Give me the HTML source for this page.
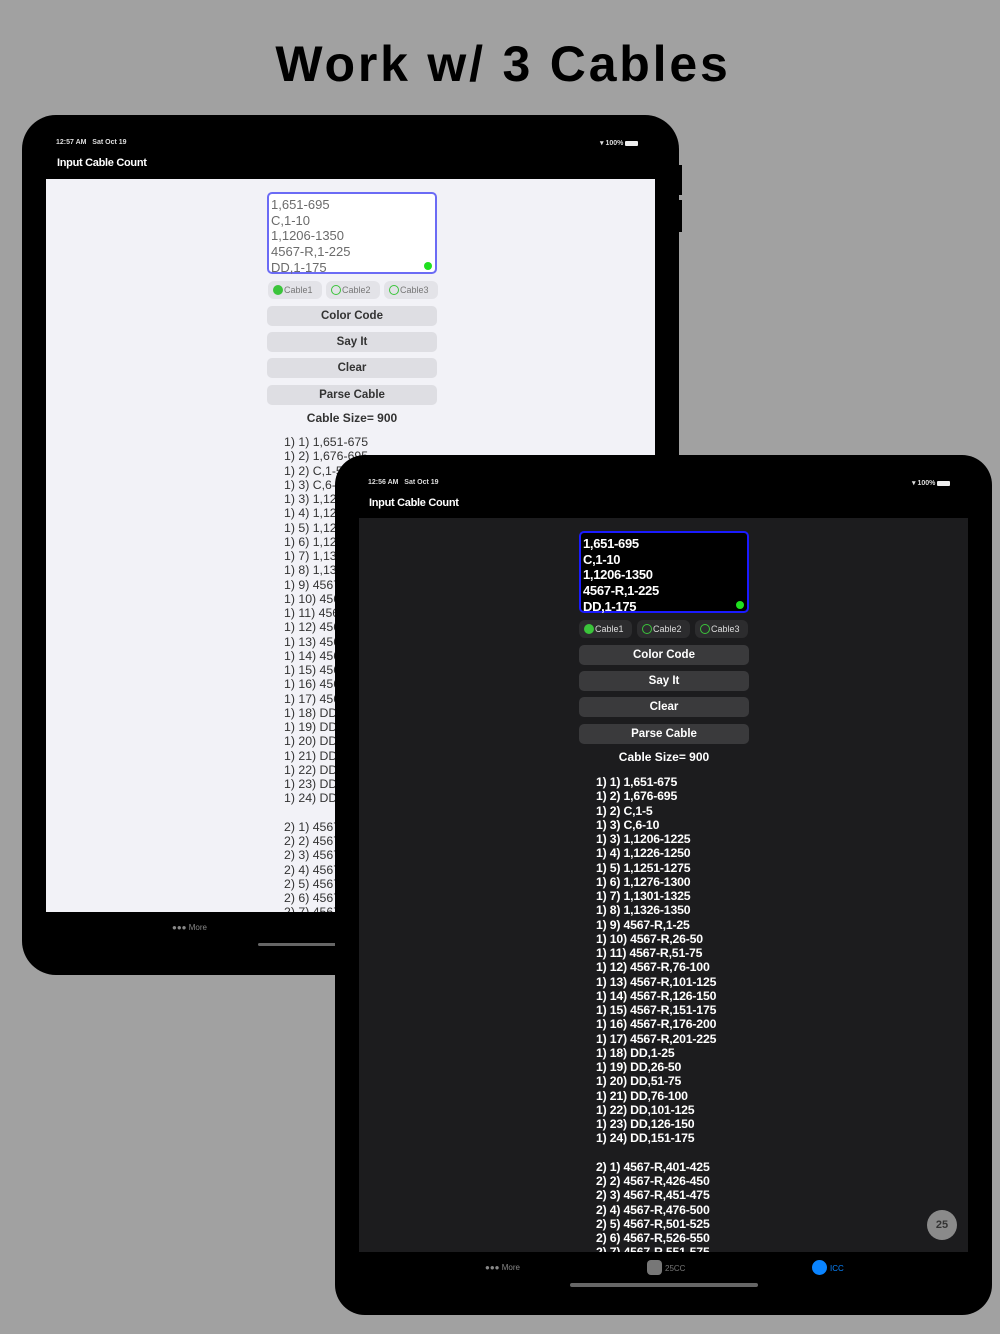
<!DOCTYPE html>
<html><head><meta charset="utf-8">
<style>
*{margin:0;padding:0;box-sizing:border-box}
body{width:1000px;height:1334px;background:#a1a1a1;position:relative;overflow:hidden;font-family:"Liberation Sans",sans-serif}
.abs{position:absolute}
h1{position:absolute;left:0;width:1006px;top:35px;text-align:center;font-size:50px;font-weight:bold;color:#000;letter-spacing:2.8px}
.dev{position:absolute;background:#000;border-radius:34px}
.scr{position:absolute;overflow:hidden}
.st{position:absolute;font-size:7px;font-weight:bold;color:#ddd}
.ttl{position:absolute;font-size:11px;font-weight:bold;color:#fff;letter-spacing:-0.3px}
.tb{position:absolute;width:170px;height:82px;border-radius:5px;padding:3px 2px;font-size:13px;line-height:15.7px}
.dot{position:absolute;right:3px;bottom:2px;width:8px;height:8px;border-radius:50%;background:#1fe01f}
.rad{position:absolute;top:0;height:18px;width:54px;border-radius:6px;font-size:9px;line-height:18px;padding-left:16px}
.rad i{position:absolute;left:5px;top:4px;width:10px;height:10px;border-radius:50%;border:1.5px solid #3bc43b}
.rad i.f{background:#3bc43b}
.btn{position:absolute;width:170px;height:20px;border-radius:5px;text-align:center;font-size:11.5px;line-height:20px;font-weight:bold}
.cs{position:absolute;width:170px;text-align:center;font-size:12px;font-weight:bold}
.list{position:absolute;font-size:12.3px;line-height:14.25px;white-space:pre}
</style></head><body>
<h1>Work w/ 3 Cables</h1>

<!-- back device -->
<div class="dev" style="left:22px;top:115px;width:657px;height:860px"></div>
<div class="abs" style="left:678px;top:165px;width:4px;height:30px;background:#000"></div>
<div class="abs" style="left:678px;top:200px;width:4px;height:32px;background:#000"></div>
<div class="st" style="left:56px;top:139px">12:57 AM&nbsp;&nbsp; Sat Oct 19</div>
<div class="st" style="left:600px;top:139px">&#9662; 100% <span style="display:inline-block;width:13px;height:5px;background:#eee;border-radius:1px;vertical-align:middle"></span></div>
<div class="ttl" style="left:57px;top:157px">Input Cable Count</div>
<div class="scr" style="left:46px;top:179px;width:609px;height:733px;background:#f2f2f7">
  <div class="tb" style="left:221px;top:13px;background:#fff;border:2px solid #6b6bf5;color:#6b6b6b">1,651-695<br>C,1-10<br>1,1206-1350<br>4567-R,1-225<br>DD,1-175<div class="dot"></div></div>
  <div class="abs" style="left:222px;top:102px;width:170px;height:18px">
    <div class="rad" style="left:0;background:#e3e3e8;color:#777"><i class="f"></i>Cable1</div>
    <div class="rad" style="left:58px;background:#e3e3e8;color:#777"><i></i>Cable2</div>
    <div class="rad" style="left:116px;background:#e3e3e8;color:#777"><i></i>Cable3</div>
  </div>
  <div class="btn" style="left:221px;top:127px;background:#dedee3;color:#333">Color Code</div>
  <div class="btn" style="left:221px;top:153px;background:#dedee3;color:#333">Say It</div>
  <div class="btn" style="left:221px;top:179px;background:#dedee3;color:#333">Clear</div>
  <div class="btn" style="left:221px;top:206px;background:#dedee3;color:#333">Parse Cable</div>
  <div class="cs" style="left:221px;top:232px;color:#333">Cable Size= 900</div>
  <div class="list" style="left:238px;top:256px;color:#333">1) 1) 1,651-675
1) 2) 1,676-695
1) 2) C,1-5
1) 3) C,6-10
1) 3) 1,1206-1225
1) 4) 1,1226-1250
1) 5) 1,1251-1275
1) 6) 1,1276-1300
1) 7) 1,1301-1325
1) 8) 1,1326-1350
1) 9) 4567-R,1-25
1) 10) 4567-R,26-50
1) 11) 4567-R,51-75
1) 12) 4567-R,76-100
1) 13) 4567-R,101-125
1) 14) 4567-R,126-150
1) 15) 4567-R,151-175
1) 16) 4567-R,176-200
1) 17) 4567-R,201-225
1) 18) DD,1-25
1) 19) DD,26-50
1) 20) DD,51-75
1) 21) DD,76-100
1) 22) DD,101-125
1) 23) DD,126-150
1) 24) DD,151-175

2) 1) 4567-R,401-425
2) 2) 4567-R,426-450
2) 3) 4567-R,451-475
2) 4) 4567-R,476-500
2) 5) 4567-R,501-525
2) 6) 4567-R,526-550
2) 7) 4567-R,551-575</div>
</div>
<div class="abs" style="left:172px;top:923px;font-size:8px;color:#888">&#9679;&#9679;&#9679; More</div>
<div class="abs" style="left:258px;top:943px;width:90px;height:3px;border-radius:2px;background:#666"></div>

<!-- front device -->
<div class="dev" style="left:335px;top:455px;width:657px;height:860px;border-radius:30px"></div>
<div class="st" style="left:368px;top:479px">12:56 AM&nbsp;&nbsp; Sat Oct 19</div>
<div class="st" style="left:912px;top:479px">&#9662; 100% <span style="display:inline-block;width:13px;height:5px;background:#eee;border-radius:1px;vertical-align:middle"></span></div>
<div class="ttl" style="left:369px;top:497px">Input Cable Count</div>
<div class="scr" style="left:359px;top:518px;width:609px;height:734px;background:#1c1c1e">
  <div class="tb" style="left:220px;top:13px;background:#000;border:2px solid #1a1aff;color:#fff;font-weight:bold;letter-spacing:-0.3px">1,651-695<br>C,1-10<br>1,1206-1350<br>4567-R,1-225<br>DD,1-175<div class="dot"></div></div>
  <div class="abs" style="left:220px;top:102px;width:170px;height:18px">
    <div class="rad" style="left:0;width:53px;background:#2c2c2e;color:#ddd"><i class="f"></i>Cable1</div>
    <div class="rad" style="left:58px;width:53px;background:#2c2c2e;color:#ddd"><i></i>Cable2</div>
    <div class="rad" style="left:116px;width:53px;background:#2c2c2e;color:#ddd"><i></i>Cable3</div>
  </div>
  <div class="btn" style="left:220px;top:127px;background:#3a3a3c;color:#fff">Color Code</div>
  <div class="btn" style="left:220px;top:153px;background:#3a3a3c;color:#fff">Say It</div>
  <div class="btn" style="left:220px;top:179px;background:#3a3a3c;color:#fff">Clear</div>
  <div class="btn" style="left:220px;top:206px;background:#3a3a3c;color:#fff">Parse Cable</div>
  <div class="cs" style="left:220px;top:232px;color:#fff">Cable Size= 900</div>
  <div class="list" style="left:237px;top:257px;color:#fff;font-weight:bold;letter-spacing:-0.2px">1) 1) 1,651-675
1) 2) 1,676-695
1) 2) C,1-5
1) 3) C,6-10
1) 3) 1,1206-1225
1) 4) 1,1226-1250
1) 5) 1,1251-1275
1) 6) 1,1276-1300
1) 7) 1,1301-1325
1) 8) 1,1326-1350
1) 9) 4567-R,1-25
1) 10) 4567-R,26-50
1) 11) 4567-R,51-75
1) 12) 4567-R,76-100
1) 13) 4567-R,101-125
1) 14) 4567-R,126-150
1) 15) 4567-R,151-175
1) 16) 4567-R,176-200
1) 17) 4567-R,201-225
1) 18) DD,1-25
1) 19) DD,26-50
1) 20) DD,51-75
1) 21) DD,76-100
1) 22) DD,101-125
1) 23) DD,126-150
1) 24) DD,151-175

2) 1) 4567-R,401-425
2) 2) 4567-R,426-450
2) 3) 4567-R,451-475
2) 4) 4567-R,476-500
2) 5) 4567-R,501-525
2) 6) 4567-R,526-550
2) 7) 4567-R,551-575</div>
  <div class="abs" style="left:568px;top:692px;width:30px;height:30px;border-radius:50%;background:#8a8a8a;color:#333;font-size:11px;font-weight:bold;text-align:center;line-height:30px">25</div>
</div>
<div class="abs" style="left:485px;top:1263px;font-size:8px;color:#888">&#9679;&#9679;&#9679; More</div>
<div class="abs" style="left:647px;top:1260px;width:15px;height:15px;border-radius:4px;background:#777"></div>
<div class="abs" style="left:665px;top:1264px;font-size:8px;color:#777">25CC</div>
<div class="abs" style="left:812px;top:1260px;width:15px;height:15px;border-radius:50%;background:#0a84ff"></div>
<div class="abs" style="left:830px;top:1264px;font-size:8px;color:#0a84ff">ICC</div>
<div class="abs" style="left:570px;top:1283px;width:188px;height:4px;border-radius:2px;background:#666"></div>
</body></html>
